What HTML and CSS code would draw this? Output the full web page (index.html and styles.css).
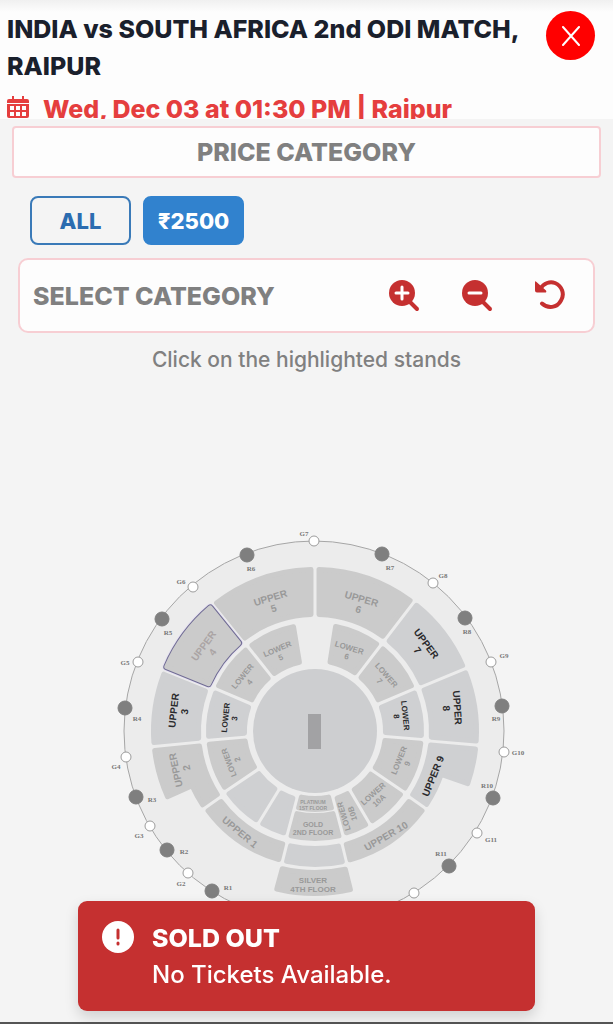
FILE: index.html
```
<!DOCTYPE html>
<html lang="en">

<head>
    <meta charset="UTF-8">
    <meta name="viewport" content="width=device-width, initial-scale=1.0">
    <title>INDIA vs SOUTH AFRICA 2nd ODI MATCH, RAIPUR</title>
    <link rel="stylesheet" href="styles.css">
</head>

<body>
    <header class="event-header">
        <div class="event-info">
            <h1>INDIA vs SOUTH AFRICA 2nd ODI MATCH, RAIPUR</h1>
            <p class="event-date">
                <svg class="calendar-icon" viewBox="0 0 22 22" aria-hidden="true">
                    <path d="M5 0h2v3h8V0h2v3h3q2 0 2 2v2H0V5q0-2 2-2h3z" />
                    <path fill-rule="evenodd" d="M0 8h22v12q0 2-2 2H2q-2 0-2-2zM3 10v4h4v-4zM9 10v4h4v-4zM15 10v4h4v-4zM3 16v4h4v-4zM9 16v4h4v-4zM15 16v4h4v-4z" />
                </svg>
                <span>Wed, Dec 03 at 01:30 PM | Raipur</span>
            </p>
        </div>
        <button type="button" class="close-btn" aria-label="Close">
            <svg viewBox="0 0 18 20" aria-hidden="true">
                <path d="M1 1l16 18M17 1L1 19" />
            </svg>
        </button>
    </header>

    <main>
        <h2 class="price-title">PRICE CATEGORY</h2>

        <div class="price-list">
            <button type="button" class="price-btn">ALL</button>
            <button type="button" class="price-btn active">₹2500</button>
        </div>

        <div class="category-bar">
            <h2>SELECT CATEGORY</h2>
            <div class="map-tools">
                <button type="button" class="tool-btn" aria-label="Zoom in">
                    <svg viewBox="0 0 32 32" aria-hidden="true">
                        <path class="line" d="M20 20l9 9" />
                        <circle cx="14" cy="13" r="13" />
                        <path class="sign" d="M8 13h12M14 7v12" />
                    </svg>
                </button>
                <button type="button" class="tool-btn" aria-label="Zoom out">
                    <svg viewBox="0 0 32 32" aria-hidden="true">
                        <path class="line" d="M20 20l9 9" />
                        <circle cx="14" cy="13" r="13" />
                        <path class="sign" d="M8 13h12" />
                    </svg>
                </button>
                <button type="button" class="tool-btn" aria-label="Reset map">
                    <svg viewBox="0 0 32 32" aria-hidden="true">
                        <path class="line" d="M6 9C10 3 16 1 21 3C28 6 31 14 27 20.500C23 28 14 29 8 23.500" />
                        <path d="M1 2.500q0-2 1.500-.5L12 10.500q1 2-1 2H3q-2 0-2-2z" />
                    </svg>
                </button>
            </div>
        </div>

        <p class="hint">Click on the highlighted stands</p>

        <svg class="stadium" viewBox="0 384 613 638" role="img" aria-label="Stadium map">
            <circle class="boundary" cx="314" cy="731" r="190" />
            <g id="stands"></g>
            <circle class="field" cx="315" cy="731" r="62" />
            <rect class="pitch" x="308" y="714" width="13" height="35" />
            <g id="labels"></g>
            <g id="gates"></g>
        </svg>
    </main>

    <div class="alert" role="alert">
        <svg class="alert-icon" viewBox="0 0 32 32" aria-hidden="true">
            <circle cx="16" cy="16" r="16" />
            <path d="M16 9v8M16 22v1" />
        </svg>
        <div>
            <strong>SOLD OUT</strong>
            <p>No Tickets Available.</p>
        </div>
    </div>

    <script>
        const CX = 315;
        const CY = 731;
        const svgNS = 'http://www.w3.org/2000/svg';

        // o / i - outer and inner radius, a / b - start and end angle, clockwise from the top
        const stands = [
            { o: 164, i: 114, a: 0, b: 37.5 },
            { o: 164, i: 114, a: 37.5, b: 67.5, open: true },
            { o: 164, i: 114, a: 67.5, b: 95, open: true },
            { o: 164, i: 114, a: 95, b: 125, open: true, cut: 109, step: 136, side: 'end' },
            { o: 136, i: 115, a: 125, b: 166.5 },
            { o: 136, i: 115, a: 166.5, b: 194, open: true },
            { o: 136, i: 115, a: 194, b: 235 },
            { o: 164, i: 114, a: 235, b: 264.5, cut: 246, step: 137, side: 'start' },
            { o: 164, i: 114, a: 264.5, b: 292, open: true },
            { o: 164, i: 114, a: 292, b: 321, selected: true },
            { o: 164, i: 114, a: 321, b: 360 },
            { o: 109, i: 68, a: 9, b: 37.5 },
            { o: 109, i: 68, a: 37.5, b: 67 },
            { o: 109, i: 68, a: 67, b: 94.5, open: true },
            { o: 109, i: 68, a: 94.5, b: 124.5 },
            { o: 109, i: 68, a: 124.5, b: 149.5 },
            { o: 109, i: 68, a: 149.5, b: 165 },
            { o: 81, i: 65, a: 165, b: 195 },
            { o: 110, i: 82, a: 165, b: 195 },
            { o: 109, i: 68, a: 195, b: 211.5, open: true },
            { o: 109, i: 68, a: 211.5, b: 236, open: true },
            { o: 109, i: 68, a: 236, b: 265 },
            { o: 109, i: 68, a: 265, b: 293, open: true },
            { o: 109, i: 68, a: 293, b: 321.5 },
            { o: 109, i: 68, a: 321.5, b: 350.5 },
            { o: 165, i: 139, a: 166, b: 195 }
        ];

        // [lines, x, y, rotation, font size, style]
        const labels = [
            [['UPPER', '5'], 272, 603, -17, 10, ''],
            [['UPPER', '6'], 360, 604, 16, 10, ''],
            [['UPPER', '7'], 422, 647, 53, 10, 'dark'],
            [['UPPER', '8'], 452, 708, 86, 10, 'dark'],
            [['UPPER 9'], 433, 776, -68, 10, 'dark'],
            [['UPPER 10'], 386, 836, -30, 10, ''],
            [['UPPER 1'], 240, 832, 40, 10, ''],
            [['UPPER', '2'], 181, 769, -102, 10, ''],
            [['UPPER', '3'], 179, 711, -84, 10, 'dark'],
            [['UPPER', '4'], 208, 649, -54, 10, 'faded'],
            [['LOWER', '5'], 279, 653, -23, 8, ''],
            [['LOWER', '6'], 348, 652, 17, 8, ''],
            [['LOWER', '7'], 383, 678, 49, 8, ''],
            [['LOWER', '8'], 401, 716, 84, 8, 'dark'],
            [['LOWER', '9'], 403, 762, -68, 8, ''],
            [['LOWER', '10A'], 376, 797, -42, 8, ''],
            [['LOWER', '10B'], 348, 815, -107, 8, ''],
            [['LOWER', '2'], 233, 761, -111, 8, ''],
            [['LOWER', '3'], 230, 718, -84, 8, 'dark'],
            [['LOWER', '4'], 246, 679, -51, 8, ''],
            [['PLATINUM', '1ST FLOOR'], 313, 805, 0, 5, ''],
            [['GOLD', '2ND FLOOR'], 313, 828, 0, 7, ''],
            [['SILVER', '4TH FLOOR'], 313, 885, 0, 8, '']
        ];

        // [name, gate x, gate y, label x, label y]
        const gates = [
            ['R1', 212, 891, 228, 888],
            ['G2', 188, 873, 181, 884],
            ['R2', 167, 850, 184, 852],
            ['G3', 150, 826, 139, 836],
            ['R3', 136, 797, 152, 800],
            ['G4', 126, 757, 116, 767],
            ['R4', 125, 708, 137, 719],
            ['G5', 138, 662, 125, 663],
            ['R5', 162, 619, 168, 633],
            ['G6', 193, 587, 181, 582],
            ['R6', 247, 555, 251, 569],
            ['G7', 314, 541, 304, 534],
            ['R7', 382, 554, 390, 568],
            ['G8', 433, 583, 443, 576],
            ['R8', 465, 618, 467, 632],
            ['G9', 491, 662, 504, 656],
            ['R9', 502, 706, 496, 719],
            ['G10', 504, 752, 518, 753],
            ['R10', 493, 798, 487, 786],
            ['G11', 477, 833, 491, 840],
            ['R11', 449, 866, 441, 854],
            ['', 414, 893, 0, 0]
        ];

        function add(parent, tag, attrs, text) {
            const el = document.createElementNS(svgNS, tag);
            for (const key in attrs) {
                el.setAttribute(key, attrs[key]);
            }
            if (text) {
                el.textContent = text;
            }
            parent.appendChild(el);
            return el;
        }

        // Point on the ring, moved "pad" units sideways so that the gaps stay parallel
        function point(r, deg, pad) {
            const t = deg * Math.PI / 180 + pad / r;
            return (CX + r * Math.sin(t)).toFixed(1) + ' ' + (CY - r * Math.cos(t)).toFixed(1);
        }

        function standPath(s) {
            const pad = 4;
            const o = s.o - 2.5;
            const i = s.i + 2.5;
            const step = s.step - 2.5;
            let d = '';
            if (s.side === 'start') {
                d += `M${point(step, s.a, pad)}A${step} ${step} 0 0 1 ${point(step, s.cut, 0)}L${point(o, s.cut, 0)}`;
            } else {
                d += `M${point(o, s.a, pad)}`;
            }
            if (s.side === 'end') {
                d += `A${o} ${o} 0 0 1 ${point(o, s.cut, 0)}L${point(step, s.cut, 0)}`;
                d += `A${step} ${step} 0 0 1 ${point(step, s.b, -pad)}`;
            } else {
                d += `A${o} ${o} 0 0 1 ${point(o, s.b, -pad)}`;
            }
            d += `L${point(i, s.b, -pad)}A${i} ${i} 0 0 0 ${point(i, s.a, pad)}Z`;
            return d;
        }

        const standGroup = document.getElementById('stands');
        stands.forEach((s) => {
            const d = standPath(s);
            if (s.selected) {
                add(standGroup, 'path', { d, class: 'stand-halo' });
                add(standGroup, 'path', { d, class: 'stand-outline' });
            }
            add(standGroup, 'path', { d, class: s.open ? 'stand open' : 'stand' });
        });

        const labelGroup = document.getElementById('labels');
        labels.forEach(([lines, x, y, angle, size, style]) => {
            const text = add(labelGroup, 'text', {
                class: 'stand-label ' + style,
                'font-size': size,
                transform: `rotate(${angle} ${x} ${y})`
            });
            lines.forEach((line, n) => {
                const offset = (n - (lines.length - 1) / 2) * (size + 1) + size * 0.36;
                add(text, 'tspan', { x, y: y + offset }, line);
            });
        });

        const gateGroup = document.getElementById('gates');
        gates.forEach(([name, x, y, tx, ty]) => {
            const road = name.startsWith('R');
            add(gateGroup, 'circle', { cx: x, cy: y, r: road ? 7 : 5, class: road ? 'gate road' : 'gate' });
            if (name) {
                add(gateGroup, 'text', { x: tx, y: ty + 2, class: 'gate-label' }, name);
            }
        });
    </script>
</body>

</html>
```
FILE: styles.css
```
* {
    box-sizing: border-box;
}

body {
    font-family: Inter, "Liberation Sans", sans-serif;
    margin: 0;
    background-color: #f4f4f4;
    border-bottom: 2px solid #555;
}

h1,
h2,
p {
    margin: 0;
}

button {
    font-family: inherit;
    cursor: pointer;
}

.event-header {
    display: flex;
    justify-content: space-between;
    height: 119px;
    padding: 11px 18px 0 7px;
    background: linear-gradient(#f0f0f0, #fdfdfd 12px);
    overflow: hidden;
}

h1 {
    color: #1a202c;
    font-size: 25px;
    font-weight: 800;
    line-height: 37px;
}

.event-date {
    display: flex;
    align-items: center;
    gap: 14px;
    margin-top: 6px;
    color: #e53e3e;
    font-size: 25px;
    font-weight: 800;
    line-height: 36px;
}

.calendar-icon {
    width: 22px;
    height: 22px;
    margin-bottom: 4px;
    fill: #e53e3e;
}

.close-btn {
    display: flex;
    flex: none;
    align-items: center;
    justify-content: center;
    width: 49px;
    height: 49px;
    padding: 0;
    border: none;
    border-radius: 50%;
    background-color: #f00;
}

.close-btn svg {
    width: 18px;
    height: 20px;
    fill: none;
    stroke: #fff;
    stroke-width: 2;
    stroke-linecap: round;
}

.price-title {
    margin: 7px 12px 0;
    border: 2px solid #f7ced3;
    border-radius: 4px;
    background-color: #fdfdfd;
    color: #808080;
    font-size: 25px;
    font-weight: 800;
    line-height: 48px;
    text-align: center;
}

.price-list {
    display: flex;
    gap: 12px;
    padding: 18px 30px 13px;
}

.price-btn {
    width: 101px;
    height: 49px;
    padding: 0;
    border: 2px solid #3a7ab8;
    border-radius: 8px;
    background-color: transparent;
    color: #2b6cb0;
    font-size: 22px;
    font-weight: 800;
}

.price-btn.active {
    border-color: #3182ce;
    background-color: #3182ce;
    color: #fff;
}

.category-bar {
    display: flex;
    align-items: center;
    justify-content: space-between;
    height: 75px;
    margin: 0 18px;
    padding: 0 27px 0 13px;
    border: 2px solid #f7ced3;
    border-radius: 10px;
    background-color: #fdfdfd;
}

.category-bar h2 {
    color: #808080;
    font-size: 25px;
    font-weight: 800;
}

.map-tools {
    display: flex;
    gap: 41px;
}

.tool-btn {
    padding: 0;
    border: none;
    background: none;
}

.tool-btn svg {
    display: block;
    width: 32px;
    height: 32px;
    fill: #c53030;
}

.tool-btn .line {
    fill: none;
    stroke: #c53030;
    stroke-width: 4;
    stroke-linecap: round;
}

.tool-btn .sign {
    fill: none;
    stroke: #fff;
    stroke-width: 3;
    stroke-linecap: round;
}

.hint {
    padding: 13px 0 10px;
    color: #808080;
    font-size: 21px;
    font-weight: 500;
    line-height: 28px;
    text-align: center;
}

.stadium {
    display: block;
    width: 100%;
}

.boundary {
    fill: #ececec;
    stroke: #a6a6a6;
}

.field {
    fill: #cdced0;
}

.pitch {
    fill: #a2a2a4;
}

.stand {
    fill: #cbcbcb;
    stroke: #cbcbcb;
    stroke-width: 5;
    stroke-linejoin: round;
}

.stand.open {
    fill: #cfd0d2;
    stroke: #cfd0d2;
}

.stand-halo {
    fill: none;
    stroke: #e6e2f0;
    stroke-width: 9;
    stroke-linejoin: round;
}

.stand-outline {
    fill: none;
    stroke: #706c94;
    stroke-width: 7;
    stroke-linejoin: round;
}

.stand-label {
    fill: #999;
    font-family: "Liberation Sans", sans-serif;
    font-weight: 700;
    text-anchor: middle;
}

.stand-label.dark {
    fill: #2a2a2c;
}

.stand-label.faded {
    fill: #aaa4a4;
}

.gate {
    fill: #fff;
    stroke: #9c9c9c;
}

.gate.road {
    fill: #7f7f7f;
    stroke: #7f7f7f;
}

.gate-label {
    fill: #777;
    font-family: "Liberation Serif", serif;
    font-size: 7px;
    font-weight: 700;
    text-anchor: middle;
}

.alert {
    position: fixed;
    right: 78px;
    bottom: 13px;
    left: 78px;
    display: flex;
    gap: 18px;
    padding: 19px 24px 18px;
    border-radius: 9px;
    background-color: #c53030;
    box-shadow: 0 6px 14px rgba(0, 0, 0, 0.15);
    color: #fff;
    font-size: 24px;
    line-height: 36px;
}

.alert strong {
    font-size: 25px;
    font-weight: 800;
}

.alert p {
    font-weight: 500;
}

.alert-icon {
    width: 32px;
    height: 32px;
    margin-top: 1px;
    fill: #fff;
}

.alert-icon path {
    fill: none;
    stroke: #c53030;
    stroke-width: 3;
    stroke-linecap: round;
}
```
